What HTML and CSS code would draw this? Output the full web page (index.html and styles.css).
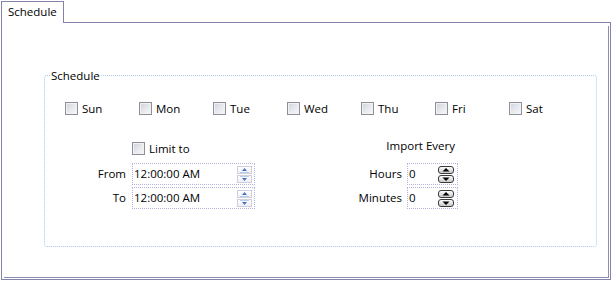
FILE: index.html
```html
<!DOCTYPE html>
<html lang="en">
<head>
  <meta charset="UTF-8" />
  <title>Schedule</title>
  <link rel="stylesheet" href="styles.css">
</head>
<body>
  <div class="tab-control">
    <div class="tab-header">Schedule</div>
    <div class="tab-panel">
      <div class="tab-inner">
        <div class="group">
          <span class="group-title">Schedule</span>

          <!-- Days of week -->
          <div class="days">
            <label class="check"><input type="checkbox" class="cb"><span>Sun</span></label>
            <label class="check"><input type="checkbox" class="cb"><span>Mon</span></label>
            <label class="check"><input type="checkbox" class="cb"><span>Tue</span></label>
            <label class="check"><input type="checkbox" class="cb"><span>Wed</span></label>
            <label class="check"><input type="checkbox" class="cb"><span>Thu</span></label>
            <label class="check"><input type="checkbox" class="cb"><span>Fri</span></label>
            <label class="check"><input type="checkbox" class="cb"><span>Sat</span></label>
          </div>

          <div class="options">
            <!-- Time window -->
            <div class="limit">
              <span></span>
              <label class="check limit-check"><input type="checkbox" class="cb"><span>Limit to</span></label>

              <span class="lbl">From</span>
              <div class="field time">
                <span class="value">12:00:00 AM</span>
                <span class="spin">
                  <span class="spin-btn"><svg width="13" height="6" viewBox="0 0 13 6"><path d="M4 4 L6.5 1 L9 4 Z" fill="#4d6fcc"/><path d="M2 5.5 H11" stroke="#b9cdf0" stroke-width="1"/></svg></span>
                  <span class="spin-btn"><svg width="13" height="6" viewBox="0 0 13 6"><path d="M2 0.5 H11" stroke="#b9cdf0" stroke-width="1"/><path d="M4 2 L9 2 L6.5 5 Z" fill="#4d6fcc"/></svg></span>
                </span>
              </div>

              <span class="lbl">To</span>
              <div class="field time">
                <span class="value">12:00:00 AM</span>
                <span class="spin">
                  <span class="spin-btn"><svg width="13" height="6" viewBox="0 0 13 6"><path d="M4 4 L6.5 1 L9 4 Z" fill="#4d6fcc"/><path d="M2 5.5 H11" stroke="#b9cdf0" stroke-width="1"/></svg></span>
                  <span class="spin-btn"><svg width="13" height="6" viewBox="0 0 13 6"><path d="M2 0.5 H11" stroke="#b9cdf0" stroke-width="1"/><path d="M4 2 L9 2 L6.5 5 Z" fill="#4d6fcc"/></svg></span>
                </span>
              </div>
            </div>

            <!-- Import interval -->
            <div class="import">
              <span class="import-title">Import Every</span>

              <span class="lbl">Hours</span>
              <div class="field num">
                <span class="value">0</span>
                <span class="spin">
                  <span class="spin-btn dark"><svg width="14" height="6" viewBox="0 0 14 6"><path d="M3.5 4.5 L7 1 L10.5 4.5 Z" fill="#000"/></svg></span>
                  <span class="spin-btn dark"><svg width="14" height="6" viewBox="0 0 14 6"><path d="M3.5 1.5 L10.5 1.5 L7 5 Z" fill="#000"/></svg></span>
                </span>
              </div>

              <span class="lbl">Minutes</span>
              <div class="field num">
                <span class="value">0</span>
                <span class="spin">
                  <span class="spin-btn dark"><svg width="14" height="6" viewBox="0 0 14 6"><path d="M3.5 4.5 L7 1 L10.5 4.5 Z" fill="#000"/></svg></span>
                  <span class="spin-btn dark"><svg width="14" height="6" viewBox="0 0 14 6"><path d="M3.5 1.5 L10.5 1.5 L7 5 Z" fill="#000"/></svg></span>
                </span>
              </div>
            </div>
          </div>
        </div>
      </div>
    </div>
  </div>
</body>
</html>
```

FILE: styles.css
```css
*, *::before, *::after {
  box-sizing: border-box;
}
body {
  margin: 0;
  background-color: #fff;
  color: #000;
  font-family: 'Open Sans', 'Noto Sans', sans-serif;
  font-size: 11.5px;
}
.tab-control {
  padding: 1px 0 0 1px;
}
.tab-header {
  position: relative;
  z-index: 1;
  width: 63px;
  height: 22px;
  margin-bottom: -1px;
  padding-left: 6px;
  line-height: 19px;
  background-color: #fff;
  border: 1px solid #8383a9;
  border-bottom: none;
}
.tab-panel {
  width: 610px;
  height: 258px;
  border: 1px solid #8383a9;
}
.tab-inner {
  height: 252px;
  margin: 3px 1px 1px 2px;
  padding: 49px 0 0 40px;
  border-right: 1px solid #8e8eb0;
  border-bottom: 1px solid #8e8eb0;
}
.group {
  position: relative;
  width: 553px;
  height: 172px;
  padding: 26px 0 0 20px;
  border: 1px dotted #a9c8ee;
  border-radius: 3px;
}
.group-title {
  position: absolute;
  top: -7px;
  left: 5px;
  padding: 0 1px;
  line-height: 14px;
  background-color: #fff;
}
.days {
  display: flex;
}
.check {
  display: flex;
  align-items: center;
  gap: 4px;
  height: 13px;
  line-height: 13px;
}
.days .check {
  width: 74px;
}
.cb {
  appearance: none;
  -webkit-appearance: none;
  flex: none;
  width: 13px;
  height: 13px;
  margin: 0;
  border: 1px solid #8f8f9b;
  background: linear-gradient(135deg, #cdd1da 0%, #e6e8ec 50%, #f8f8f8 100%);
  box-shadow: inset 0 0 0 1px #f2f2f2;
}
.options {
  display: flex;
  align-items: flex-start;
  margin-top: 27px;
}
.limit {
  display: grid;
  grid-template-columns: 61px 123px;
  grid-template-rows: 19px 22px 22px;
  column-gap: 6px;
  row-gap: 2px;
}
.limit-check {
  align-self: start;
}
.import {
  display: grid;
  grid-template-columns: 47px 51px;
  grid-template-rows: 22px 22px 22px;
  column-gap: 5px;
  row-gap: 2px;
  margin: -3px 0 0 100px;
}
.import-title {
  grid-column: 1 / -1;
  align-self: start;
  padding-right: 3px;
  text-align: right;
  line-height: 14px;
}
.lbl {
  text-align: right;
  line-height: 22px;
}
.field {
  display: flex;
  align-items: center;
  border: 1px dotted #b3b3e2;
}
.value {
  padding-left: 1px;
  line-height: 20px;
}
.spin {
  display: flex;
  flex-direction: column;
  gap: 1px;
  margin-left: auto;
}
.time .spin {
  margin-right: 2px;
}
.num .spin {
  margin-right: 3px;
}
.spin-btn {
  display: flex;
  align-items: center;
  justify-content: center;
  width: 15px;
  height: 8px;
  border: 1px solid #d0d0dc;
  background: linear-gradient(#fff, #eef0f6);
}
.spin-btn.dark {
  width: 16px;
  border: 1px solid #3a3a3a;
  border-radius: 3px;
  background: linear-gradient(#fdfdfd, #c9c9c9);
}
```
